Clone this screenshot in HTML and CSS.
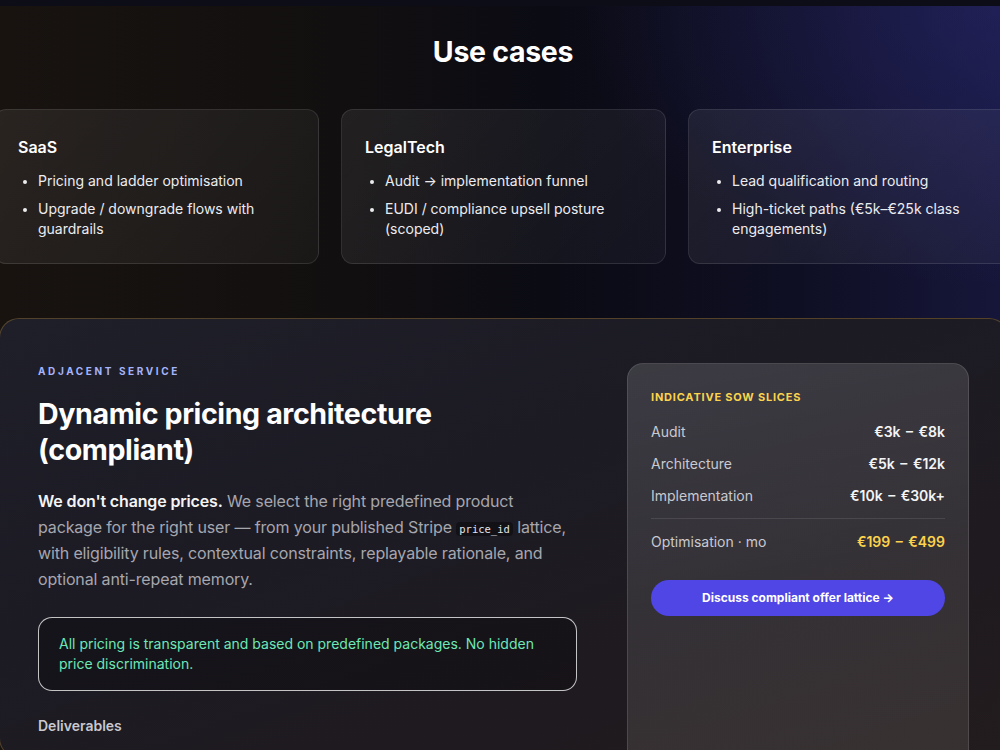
FILE: index.html
```html
<!DOCTYPE html>
<html lang="en">
<head>
<meta charset="utf-8">
<title>Use cases</title>
<link rel="stylesheet" href="styles.css">
</head>
<body>
<div class="topbar"></div>
<main class="page">
  <section class="usecases">
    <h2 class="section-title">Use cases</h2>
    <div class="cards">
      <article class="card">
        <h3 class="card-title">SaaS</h3>
        <ul class="bullets">
          <li>Pricing and ladder optimisation</li>
          <li>Upgrade / downgrade flows with guardrails</li>
        </ul>
      </article>
      <article class="card">
        <h3 class="card-title">LegalTech</h3>
        <ul class="bullets">
          <li>Audit → implementation funnel</li>
          <li>EUDI / compliance upsell posture (scoped)</li>
        </ul>
      </article>
      <article class="card">
        <h3 class="card-title">Enterprise</h3>
        <ul class="bullets">
          <li>Lead qualification and routing</li>
          <li>High-ticket paths (€5k–€25k class engagements)</li>
        </ul>
      </article>
    </div>
  </section>

  <section class="panel">
    <div class="panel-main">
      <p class="eyebrow">Adjacent service</p>
      <h2 class="panel-title">Dynamic pricing architecture (compliant)</h2>
      <p class="lead"><strong>We don't change prices.</strong> We select the right predefined product package for the right user — from your published Stripe <code>price_id</code> lattice, with eligibility rules, contextual constraints, replayable rationale, and optional anti-repeat memory.</p>
      <div class="notice">All pricing is transparent and based on predefined packages. No hidden price discrimination.</div>
      <h4 class="sub">Deliverables</h4>
    </div>
    <aside class="sow">
      <p class="sow-eyebrow">Indicative SOW slices</p>
      <div class="rows">
        <div class="row"><span>Audit</span><b>€3k – €8k</b></div>
        <div class="row"><span>Architecture</span><b>€5k – €12k</b></div>
        <div class="row"><span>Implementation</span><b>€10k – €30k+</b></div>
      </div>
      <div class="row row-total"><span>Optimisation · mo</span><b>€199 – €499</b></div>
      <a class="btn" href="#">Discuss compliant offer lattice →</a>
    </aside>
  </section>
</main>
</body>
</html>
```

FILE: styles.css
```css
* { box-sizing: border-box; }
html, body { margin: 0; padding: 0; }
body {
  background: #0b0b13;
  font-family: Inter, "Noto Sans", "Liberation Sans", sans-serif;
  color: #f4f4f5;
  overflow: hidden;
  width: 1000px;
  height: 750px;
}
.topbar {
  height: 6px;
  background: #0c0d17;
}
.page {
  background:
    radial-gradient(ellipse 600px 400px at 100% 0%, rgba(40, 40, 110, 0.55), transparent 70%),
    linear-gradient(90deg, #18130f 0%, #120f10 35%, #0b0b14 55%, #0f0f24 80%, #16163a 100%);
  height: 744px;
}
.usecases {
  padding-top: 26px;
}
.section-title {
  margin: 0;
  text-align: center;
  font-size: 28.5px;
  line-height: 40px;
  font-weight: 700;
  letter-spacing: -0.3px;
  color: #ffffff;
  padding-left: 6px;
}
.cards {
  display: grid;
  grid-template-columns: repeat(3, 325px);
  gap: 22px;
  width: 1019px;
  margin: 37px 0 0 -6px;
}
.card {
  height: 155px;
  border-radius: 12px;
  border: 1px solid rgba(255, 255, 255, 0.1);
  background: linear-gradient(135deg, rgba(255, 255, 255, 0.075), rgba(255, 255, 255, 0.035));
  padding: 25px 23px;
}
.card-title {
  margin: 0;
  font-size: 16px;
  line-height: 24px;
  font-weight: 600;
  color: #ffffff;
}
.bullets {
  margin: 12px 0 0;
  padding: 0 0 0 20px;
  list-style: disc;
  font-size: 14px;
  line-height: 20px;
  color: #ececef;
}
.bullets li { margin-bottom: 8px; }
.bullets li::marker { font-size: 12px; }

.panel {
  margin: 54px 0 0 -1px;
  width: 1010px;
  height: 440px;
  border-radius: 20px;
  border: 1px solid rgba(180, 140, 60, 0.35);
  background:
    linear-gradient(160deg, #1f1f29 0%, #1c1b24 40%, #1f1a1f 75%, #221c1e 100%);
  padding: 44px 39px 0 38px;
  display: grid;
  grid-template-columns: 539px 342px;
  gap: 50px;
  align-items: start;
}
.eyebrow {
  margin: 0;
  font-size: 10px;
  line-height: 16px;
  font-weight: 700;
  letter-spacing: 2.6px;
  text-transform: uppercase;
  color: #a5b4fc;
}
.panel-title {
  margin: 17px 0 0;
  font-size: 28.6px;
  line-height: 36px;
  font-weight: 700;
  letter-spacing: -0.4px;
  color: #ffffff;
}
.lead {
  margin: 20px 0 0;
  font-size: 16px;
  line-height: 26px;
  letter-spacing: -0.15px;
  color: #a6a6ae;
}
.lead strong { color: #f4f4f5; font-weight: 600; }
.lead code {
  font-family: "DejaVu Sans Mono", "Liberation Mono", monospace;
  font-size: 10.5px;
  letter-spacing: 0;
  background: rgba(0, 0, 0, 0.35);
  padding: 1px 3px;
  border-radius: 4px;
  color: #e4e4e7;
  line-height: 1;
}
.notice {
  margin-top: 25px;
  border: 1px solid rgba(255, 255, 255, 0.75);
  border-radius: 14px;
  background: rgba(0, 0, 0, 0.25);
  padding: 16px 20px;
  font-size: 14px;
  line-height: 20px;
  color: #6ee7b7;
}
.sub {
  margin: 25px 0 0;
  font-size: 14px;
  line-height: 20px;
  font-weight: 600;
  color: #c8c8ce;
}

.sow {
  margin-top: 0;
  height: 420px;
  border-radius: 16px;
  border: 1px solid rgba(255, 255, 255, 0.12);
  background: linear-gradient(170deg, rgba(255, 255, 255, 0.14) 0%, rgba(255, 255, 255, 0.1) 50%, rgba(255, 235, 220, 0.1) 100%);
  padding: 23px 23px;
}
.sow-eyebrow {
  margin: 0;
  font-size: 11px;
  line-height: 20px;
  font-weight: 700;
  letter-spacing: 0.8px;
  text-transform: uppercase;
  color: #fcd34d;
}
.rows {
  margin-top: 15px;
  display: flex;
  flex-direction: column;
  gap: 12px;
  padding-bottom: 12px;
  border-bottom: 1px solid rgba(255, 255, 255, 0.1);
}
.row {
  display: flex;
  justify-content: space-between;
  font-size: 14px;
  line-height: 20px;
}
.row span { color: #c9c9d0; }
.row b { color: #f4f4f5; font-weight: 600; word-spacing: 2px; }
.row-total { margin-top: 13px; }
.row-total b { color: #fcd34d; }
.btn {
  display: block;
  margin-top: 28px;
  height: 36px;
  line-height: 36px;
  border-radius: 18px;
  background: #4f46e5;
  color: #ffffff;
  text-align: center;
  font-size: 12px;
  font-weight: 700;
  text-decoration: none;
}
```
